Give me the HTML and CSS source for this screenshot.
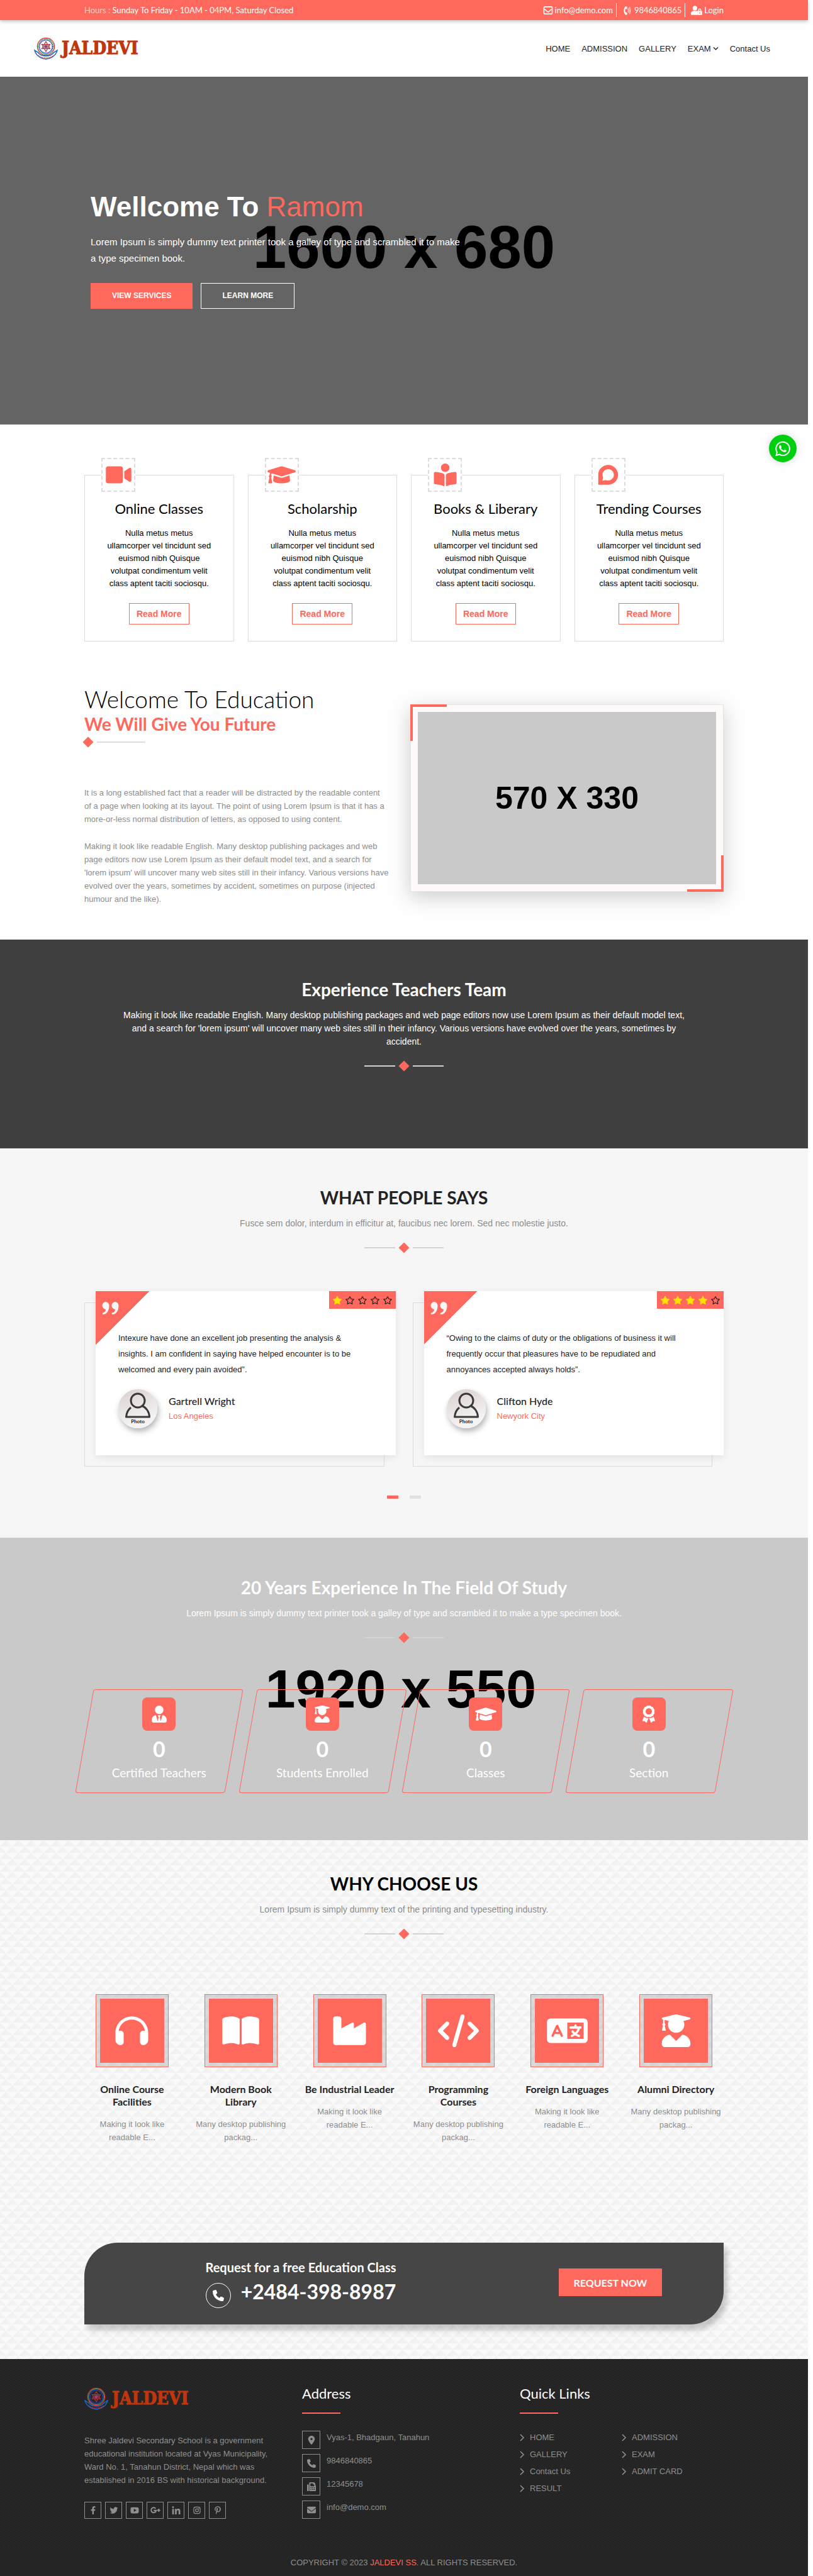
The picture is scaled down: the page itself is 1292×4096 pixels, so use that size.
FILE: index.html
```html
<!DOCTYPE html>
<html lang="en">
<head>
<meta charset="utf-8">
<meta name="viewport" content="width=device-width, initial-scale=1">
<title>Jaldevi Secondary School</title>
<link rel="stylesheet" href="styles.css">
</head>
<body>
<svg class="sprite" aria-hidden="true">
  <symbol id="i-video" viewBox="0 0 576 512"><path d="M336.2 64H47.8C21.4 64 0 85.4 0 111.8v288.4C0 426.6 21.4 448 47.8 448h288.4c26.4 0 47.8-21.4 47.8-47.8V111.8c0-26.4-21.4-47.8-47.8-47.8zm189.4 37.7L416 177.3v157.4l109.6 75.5c21.2 14.6 50.4-.3 50.4-25.8V127.5c0-25.4-29.1-40.4-50.4-25.8z"/></symbol>
  <symbol id="i-cap" viewBox="0 0 640 512"><path d="M622.34 153.2L343.4 67.5c-15.2-4.67-31.6-4.67-46.79 0L17.66 153.2c-23.54 7.23-23.54 38.36 0 45.59l48.63 14.94c-10.67 13.19-17.23 29.28-17.88 46.9C38.78 266.15 32 276.11 32 288c0 10.78 5.68 19.85 13.86 25.65L20.33 428.53C18.11 438.52 25.71 448 35.94 448h56.11c10.24 0 17.84-9.48 15.62-19.47L82.14 313.65C90.32 307.85 96 298.78 96 288c0-11.57-6.47-21.25-15.66-26.87.76-15.02 8.44-28.3 20.69-36.72L296.6 284.5c9.06 2.78 26.44 6.25 46.79 0l278.95-85.7c23.55-7.24 23.55-38.36 0-45.6zM352.79 315.09c-28.53 8.76-52.84 3.92-65.59 0l-145.02-44.55L128 384c0 35.35 85.96 64 192 64s192-28.65 192-64l-14.18-113.47-145.03 44.56z"/></symbol>
  <symbol id="i-reader" viewBox="0 0 512 512"><path d="M352 96c0-53.02-42.98-96-96-96s-96 42.98-96 96 42.98 96 96 96 96-42.98 96-96zM233.59 241.1c-59.33-36.32-155.43-46.3-203.79-49.05C13.55 191.13 0 203.51 0 219.14v222.8c0 14.33 11.59 26.28 26.49 27.05 43.66 2.29 131.99 10.68 193.04 41.43 9.37 4.72 20.48-1.71 20.48-11.87V252.56c-.01-4.67-2.32-8.95-6.42-11.46zm248.61-49.05c-48.35 2.74-144.46 12.73-203.78 49.05-4.1 2.51-6.41 6.96-6.41 11.63v245.79c0 10.19 11.14 16.63 20.54 11.9 61.04-30.72 149.32-39.11 192.97-41.4 14.9-.78 26.49-12.73 26.49-27.06V219.14c-.01-15.63-13.56-28.01-29.81-27.09z"/></symbol>
  <symbol id="i-discourse" viewBox="0 0 448 512"><path d="M225.9 32C103.3 32 0 130.5 0 252.1 0 256 .1 480 .1 480l225.8-.2c122.7 0 222.1-102.3 222.1-223.9C448 134.3 348.6 32 225.9 32zM224 384c-19.4 0-37.9-4.3-54.4-12.1L88.5 392l22.9-75c-9.8-18.1-15.4-38.9-15.4-61 0-70.7 57.3-128 128-128s128 57.3 128 128-57.3 128-128 128z"/></symbol>
  <symbol id="i-whatsapp" viewBox="0 0 448 512"><path d="M380.9 97.1C339 55.1 283.2 32 223.9 32c-122.4 0-222 99.6-222 222 0 39.1 10.2 77.3 29.6 111L0 480l117.7-30.9c32.4 17.7 68.9 27 106.1 27h.1c122.3 0 224.1-99.6 224.1-222 0-59.3-25.2-115-67.1-157zm-157 341.6c-33.2 0-65.7-8.9-94-25.7l-6.7-4-69.8 18.3L72 359.2l-4.4-7c-18.5-29.4-28.2-63.3-28.2-98.2 0-101.7 82.8-184.5 184.6-184.5 49.3 0 95.6 19.2 130.4 54.1 34.8 34.9 56.2 81.2 56.1 130.5 0 101.8-84.9 184.6-186.6 184.6zm101.2-138.2c-5.5-2.8-32.8-16.2-37.9-18-5.1-1.9-8.8-2.8-12.5 2.8-3.7 5.6-14.3 18-17.6 21.8-3.2 3.7-6.5 4.2-12 1.4-32.6-16.3-54-29.1-75.5-66-5.7-9.8 5.7-9.1 16.3-30.3 1.8-3.7.9-6.9-.5-9.7-1.4-2.8-12.5-30.1-17.1-41.2-4.5-10.8-9.1-9.3-12.5-9.5-3.2-.2-6.9-.2-10.6-.2-3.7 0-9.7 1.4-14.8 6.9-5.1 5.6-19.4 19-19.4 46.3 0 27.3 19.9 53.7 22.6 57.4 2.8 3.7 39.1 59.7 94.8 83.8 35.2 15.2 49 16.5 66.6 13.9 10.7-1.6 32.8-13.4 37.4-26.4 4.6-13 4.6-24.1 3.2-26.4-1.3-2.5-5-3.9-10.5-6.6z"/></symbol>
  <symbol id="i-tie" viewBox="0 0 448 512"><path d="M224 256c70.7 0 128-57.3 128-128S294.7 0 224 0 96 57.3 96 128s57.3 128 128 128zm95.8 32.6L272 480l-32-136 32-56h-96l32 56-32 136-47.8-191.4C56.9 292 0 350.3 0 422.4V464c0 26.5 21.5 48 48 48h352c26.5 0 48-21.5 48-48v-41.6c0-72.1-56.9-130.4-128.2-133.8z"/></symbol>
  <symbol id="i-graduate" viewBox="0 0 448 512"><path d="M319.4 320.6L224 416l-95.4-95.4C57.1 323.7 0 382.2 0 454.4v9.6c0 26.5 21.5 48 48 48h352c26.5 0 48-21.5 48-48v-9.6c0-72.2-57.1-130.7-128.6-133.8zM13.6 79.8l6.4 1.5v58.4c-7 4.2-12 11.5-12 20.3 0 8.4 4.6 15.4 11.1 19.7L3.5 242c-1.7 6.9 2.1 14 7.6 14h41.8c5.5 0 9.3-7.1 7.6-14l-15.6-62.3C51.4 175.4 56 168.4 56 160c0-8.8-5-16.1-12-20.3V87.1l66 15.9c-8.6 17.2-14 36.4-14 57 0 70.7 57.3 128 128 128s128-57.3 128-128c0-20.6-5.3-39.8-14-57l96.3-23.2c18.2-4.4 18.2-27.1 0-31.5l-190.4-46c-13-3.1-26.7-3.1-39.7 0L13.6 48.2c-18.1 4.4-18.1 27.2 0 31.6z"/></symbol>
  <symbol id="i-award" viewBox="0 0 384 512"><path d="M97.12 362.63c-8.69-8.69-4.16-6.24-25.12-11.85-9.51-2.55-17.87-7.45-25.43-13.32L1.2 448.7c-4.39 10.77 3.81 22.47 15.43 22.03l52.69-2.01L105.56 507c8 8.44 22.04 5.81 26.43-4.96l52.05-127.62c-10.84 6.04-22.87 9.58-35.31 9.58-19.5 0-37.82-7.59-51.61-21.37zM382.8 448.7l-45.37-111.24c-7.56 5.88-15.92 10.77-25.43 13.32-21.07 5.64-16.45 3.18-25.12 11.85-13.79 13.78-32.12 21.37-51.62 21.37-12.44 0-24.47-3.55-35.31-9.58L252 502.04c4.39 10.77 18.44 13.4 26.43 4.96l36.25-38.28 52.69 2.01c11.62.44 19.82-11.27 15.43-22.03zM263 340c15.28-15.55 17.03-14.21 38.79-20.14 13.89-3.79 24.75-14.84 28.47-28.98 7.48-28.4 5.54-24.97 25.95-45.75 10.17-10.35 14.14-25.44 10.42-39.58-7.47-28.38-7.48-24.42 0-52.83 3.72-14.14-.25-29.23-10.42-39.58-20.41-20.78-18.47-17.36-25.95-45.75-3.72-14.14-14.58-25.19-28.47-28.98-27.88-7.61-24.52-5.62-44.95-26.41-10.17-10.35-25-14.4-38.89-10.61-27.87 7.6-23.98 7.61-51.9 0-13.89-3.79-28.72.25-38.89 10.61-20.41 20.78-17.05 18.8-44.94 26.41-13.89 3.79-24.75 14.84-28.47 28.98-7.47 28.39-5.54 24.97-25.95 45.75-10.17 10.35-14.15 25.44-10.42 39.58 7.47 28.36 7.48 24.4 0 52.82-3.72 14.14.25 29.23 10.42 39.59 20.41 20.78 18.47 17.35 25.95 45.75 3.72 14.14 14.58 25.19 28.47 28.98C104.6 325.96 106.27 325 121 340c13.23 13.47 33.84 15.88 49.74 5.82a39.676 39.676 0 0 1 42.53 0c15.89 10.06 36.5 7.65 49.73-5.82zM97.66 175.96c0-53.03 42.24-96.02 94.34-96.02s94.34 42.99 94.34 96.02-42.24 96.02-94.34 96.02-94.34-42.99-94.34-96.02z"/></symbol>
  <symbol id="i-headphones" viewBox="0 0 512 512"><path d="M256 80C149.9 80 62.4 159.4 49.6 262c9.4-3.8 19.6-6 30.4-6c26.5 0 48 21.5 48 48V432c0 26.5-21.5 48-48 48c-44.2 0-80-35.8-80-80V384 336 288C0 146.6 114.6 32 256 32s256 114.6 256 256v48 48 16c0 44.2-35.8 80-80 80c-26.5 0-48-21.5-48-48V304c0-26.5 21.5-48 48-48c10.8 0 21 2.1 30.4 6C449.6 159.4 362.1 80 256 80z"/></symbol>
  <symbol id="i-book" viewBox="0 0 576 512"><path d="M249.6 471.5c10.8 3.8 22.4-4.1 22.4-15.5V78.6c0-4.2-1.6-8.4-5-11C247.4 52 202.4 32 144 32C93.5 32 46.3 45.3 18.1 56.1C6.8 60.5 0 71.7 0 83.8V454.1c0 11.9 12.8 20.2 24.1 16.5C55.6 460.1 105.5 448 144 448c33.9 0 79 14 105.6 23.5zm76.8 0C353 462 398.1 448 432 448c38.5 0 88.4 12.1 119.9 22.6c11.3 3.8 24.1-4.6 24.1-16.5V83.8c0-12.1-6.8-23.3-18.1-27.6C529.7 45.3 482.5 32 432 32c-58.4 0-103.4 20-123 35.6c-3.3 2.6-5 6.8-5 11V456c0 11.4 11.7 19.3 22.4 15.5z"/></symbol>
  <symbol id="i-industry" viewBox="0 0 512 512"><path d="M36 32h56c20 0 36 14 36 36v150l162-86c16-8 34 0 34 16v70l150-86c16-9 38-2 38 16v296c0 20-14 36-36 36H36c-20 0-36-16-36-36V68c0-20 14-36 36-36z"/></symbol>
  <symbol id="i-code" viewBox="0 0 640 512"><path d="M392.8 1.2c-17-4.9-34.7 5-39.6 22l-128 448c-4.9 17 5 34.7 22 39.6s34.7-5 39.6-22l128-448c4.9-17-5-34.7-22-39.6zm80.6 120.1c-12.5 12.5-12.5 32.8 0 45.3L562.7 256l-89.4 89.4c-12.5 12.5-12.5 32.8 0 45.3s32.8 12.5 45.3 0l112-112c12.5-12.5 12.5-32.8 0-45.3l-112-112c-12.5-12.5-32.8-12.5-45.3 0zm-306.7 0c-12.5-12.5-32.8-12.5-45.3 0l-112 112c-12.5 12.5-12.5 32.8 0 45.3l112 112c12.5 12.5 32.8 12.5 45.3 0s12.5-32.8 0-45.3L77.3 256l89.4-89.4c12.5-12.5 12.5-32.8 0-45.3z"/></symbol>
  <symbol id="i-language" viewBox="0 0 640 512"><rect y="64" width="640" height="384" rx="62"/><rect x="320" y="128" width="256" height="256" fill="#ff685c"/><g fill="none" stroke-linecap="round" stroke-linejoin="round" stroke-width="36"><path stroke="#ff685c" d="M90 334l72-154 72 154M118 290h88"/><path stroke="#fff" d="M448 172v28M370 206h156M506 208c-16 58-60 106-114 128M404 268c24 34 58 56 98 70"/></g></symbol>
  <symbol id="i-phone" viewBox="0 0 512 512"><path d="M164.9 24.6c-7.7-18.6-28-28.5-47.4-23.2l-88 24C12.1 30.2 0 46 0 64C0 311.4 200.6 512 448 512c18 0 33.8-12.1 38.6-29.5l24-88c5.3-19.4-4.6-39.7-23.2-47.4l-96-40c-16.3-6.8-35.2-2.1-46.3 11.6L304.7 368C234.3 334.7 177.3 277.7 144 207.3L193.3 167c13.7-11.2 18.4-30 11.6-46.3l-40-96z"/></symbol>
  <symbol id="i-pin" viewBox="0 0 384 512"><path d="M215.7 499.2C267 435 384 279.4 384 192C384 86 298 0 192 0S0 86 0 192c0 87.4 117 243 168.3 307.2c12.3 15.3 35.1 15.3 47.4 0zM192 128a64 64 0 1 1 0 128 64 64 0 1 1 0-128z"/></symbol>
  <symbol id="i-fax" viewBox="0 0 512 512"><path fill-rule="evenodd" d="M20 128h56c11 0 20 9 20 20v344c0 11-9 20-20 20H20c-11 0-20-9-20-20V148c0-11 9-20 20-20zM128 40c0-22 18-40 40-40h220c11 0 21 4 28 12l52 52c8 7 12 17 12 28v80c18 6 32 20 32 40v272c0 16-12 28-28 28H156c-16 0-28-12-28-28zM192 64v160h224V128h-64V64zM200 280v56h56v-56zM296 280v56h56v-56zM392 280v56h56v-56zM200 384v56h56v-56zM296 384v56h56v-56zM392 384v56h56v-56z"/></symbol>
  <symbol id="i-mail" viewBox="0 0 512 512"><path d="M48 64C21.5 64 0 85.5 0 112c0 15.1 7.1 29.3 19.2 38.4L236.8 313.6c11.4 8.5 27 8.5 38.4 0L492.8 150.4c12.1-9.1 19.2-23.3 19.2-38.4c0-26.5-21.5-48-48-48H48zM0 176V384c0 35.3 28.7 64 64 64H448c35.3 0 64-28.7 64-64V176L294.4 339.2c-22.8 17.1-54 17.1-76.8 0L0 176z"/></symbol>
  <symbol id="i-mail-line" viewBox="0 0 16 16"><rect x="1" y="2" width="14" height="12" rx="1.500" fill="none" stroke="currentColor" stroke-width="1.700"/><path d="M2 6l6 5L14 6" fill="none" stroke="currentColor" stroke-width="1.700"/></symbol>
  <symbol id="i-phone-waves" viewBox="0 0 384 512"><path d="M97.333 506.966c-129.874-129.874-129.681-340.252 0-469.933 5.698-5.698 14.527-6.632 21.263-2.422l64.817 40.513a17.187 17.187 0 0 1 6.849 20.958l-32.408 81.021a17.188 17.188 0 0 1-17.669 10.719l-55.81-5.58c-21.051 58.261-20.612 122.471 0 179.515l55.811-5.581a17.188 17.188 0 0 1 17.669 10.719l32.408 81.022a17.188 17.188 0 0 1-6.849 20.958l-64.817 40.513a17.190 17.190 0 0 1-21.264-2.422z"/><path d="M222 170c16 50 16 110 0 172M270 120c36 86 36 186 0 272M318 76c56 120 56 250 0 366" fill="none" stroke="currentColor" stroke-width="32" stroke-linecap="round"/></symbol>
  <symbol id="i-user-lock" viewBox="0 0 640 512"><circle cx="224" cy="128" r="128"/><path d="M314 288c-90 10-130-8-180 0C60 288 0 348 0 422v42c0 26 22 48 48 48h346c-6-10-10-20-10-32V320c0-10 2-20 8-28-24-6-50-6-78-4z"/><path fill-rule="evenodd" d="M608 288h-32v-56a80 80 0 0 0-160 0v56h-16c-18 0-32 14-32 32v160c0 18 14 32 32 32h208c18 0 32-14 32-32V320c0-18-14-32-32-32zM496 432a32 32 0 1 1 0-64 32 32 0 0 1 0 64zm32-144h-64v-58a32 32 0 0 1 64 0z"/></symbol>
  <symbol id="i-quote" viewBox="0 0 27 20"><path d="M6 0a6 6 0 0 1 6 6c0 7-3 13-9 14-2 .3-2.500-2-1-2.500 3-1 4.500-3 4.500-5.600A6 6 0 0 1 6 0zM21 0a6 6 0 0 1 6 6c0 7-3 13-9 14-2 .3-2.500-2-1-2.500 3-1 4.500-3 4.500-5.600A6 6 0 0 1 21 0z"/></symbol>
  <symbol id="i-star" viewBox="-20 -20 616 552"><path d="M259.3 17.8L194 150.2 47.9 171.5c-26.2 3.8-36.7 36.1-17.7 54.6l105.700 103-25 145.500c-4.500 26.300 23.200 46 46.400 33.700L288 439.600l130.700 68.700c23.200 12.200 50.900-7.400 46.400-33.700l-25-145.500 105.700-103c19-18.500 8.500-50.800-17.700-54.600L382 150.200 316.700 17.800c-11.700-23.600-45.600-23.900-57.400 0z"/></symbol>
  <symbol id="i-star-line" viewBox="-20 -20 616 552"><path fill="none" stroke="currentColor" stroke-width="48" stroke-linejoin="round" d="M288 34l76 138 166 26-118 120 24 166-148-72-148 72 24-166L46 198l166-26z"/></symbol>
  <symbol id="i-facebook" viewBox="0 0 320 512"><path d="M279.140 288l14.220-92.660h-88.910v-60.130c0-25.350 12.420-50.060 52.240-50.060h40.420V6.260S260.430 0 225.360 0c-73.220 0-121.080 44.380-121.080 124.720v70.620H22.890V288h81.390v224h100.170V288z"/></symbol>
  <symbol id="i-twitter" viewBox="0 0 512 512"><path d="M459.37 151.716c.325 4.548.325 9.097.325 13.645 0 138.72-105.583 298.558-298.558 298.558-59.452 0-114.68-17.219-161.137-47.106 8.447.974 16.568 1.299 25.34 1.299 49.055 0 94.213-16.568 130.274-44.832-46.132-.975-84.792-31.188-98.112-72.772 6.498.974 12.995 1.624 19.818 1.624 9.421 0 18.843-1.3 27.614-3.573-48.081-9.747-84.143-51.98-84.143-102.985v-1.299c13.969 7.797 30.214 12.67 47.431 13.319-28.264-18.843-46.781-51.005-46.781-87.391 0-19.492 5.197-37.36 14.294-52.954 51.655 63.675 129.3 105.258 216.365 109.807-1.624-7.797-2.599-15.918-2.599-24.04 0-57.828 46.782-104.934 104.934-104.934 30.213 0 57.502 12.67 76.67 33.137 23.715-4.548 46.456-13.32 66.599-25.34-7.798 24.366-24.366 44.833-46.132 57.827 21.117-2.273 41.584-8.122 60.426-16.243-14.292 20.791-32.161 39.308-52.628 54.253z"/></symbol>
  <symbol id="i-youtube" viewBox="0 0 16 16"><path fill-rule="evenodd" d="M3 2h10a3 3 0 0 1 3 3v6a3 3 0 0 1-3 3H3a3 3 0 0 1-3-3V5a3 3 0 0 1 3-3zm3.500 3v6L11.500 8z"/></symbol>
  <symbol id="i-google" viewBox="0 0 20 16"><path fill="none" stroke="currentColor" stroke-width="2.400" d="M10.500 4.500A5 5 0 1 0 11.600 8.200H6.500M13.500 8h6M16.500 5v6"/></symbol>
  <symbol id="i-linkedin" viewBox="0 0 448 448"><path d="M100.28 448H7.4V148.9h92.88zM53.79 108.1C24.09 108.1 0 83.5 0 53.8a53.79 53.79 0 0 1 107.58 0c0 29.7-24.1 54.3-53.79 54.3zM447.9 448h-92.68V302.4c0-34.7-.7-79.2-48.29-79.2-48.29 0-55.69 37.7-55.69 76.7V448h-92.78V148.9h89.08v40.8h1.3c12.4-23.5 42.69-48.3 87.88-48.3 94 0 111.28 61.9 111.28 142.3V448z"/></symbol>
  <symbol id="i-instagram" viewBox="0 0 16 16"><rect x="1.800" y="1.800" width="12.400" height="12.400" rx="3.500" fill="none" stroke="currentColor" stroke-width="1.500"/><circle cx="8" cy="8" r="2.900" fill="none" stroke="currentColor" stroke-width="1.500"/><circle cx="11.700" cy="4.300" r=".9"/></symbol>
  <symbol id="i-pinterest" viewBox="0 0 384 512"><path d="M204 6.5C101.4 6.5 0 74.9 0 185.6 0 256 39.6 296 63.6 296c9.9 0 15.6-27.6 15.6-35.4 0-9.3-23.7-29.1-23.7-67.8 0-80.4 61.2-137.4 140.4-137.4 68.1 0 118.5 38.7 118.5 109.8 0 53.1-21.3 152.7-90.3 152.7-24.9 0-46.2-18-46.2-43.8 0-37.8 26.4-74.4 26.4-113.4 0-66.2-93.9-54.2-93.9 25.8 0 16.8 2.1 35.4 9.6 50.7-13.8 59.4-42 147.9-42 209.1 0 18.9 2.7 37.5 4.5 56.4 3.4 3.8 1.7 3.4 6.9 1.5 50.4-69 48.6-82.5 71.4-172.8 12.3 23.4 44.1 36 69.3 36 106.2 0 153.9-103.5 153.9-196.8C384 71.3 298.2 6.5 204 6.5z"/></symbol>
  <symbol id="i-down" viewBox="0 0 10 8"><path fill="none" stroke="currentColor" stroke-width="1.500" d="M1 2l4 4 4-4"/></symbol>
  <symbol id="i-right" viewBox="0 0 8 12"><path fill="none" stroke="currentColor" stroke-width="1.600" d="M1 1l5 5-5 5"/></symbol>
  <symbol id="i-emblem" viewBox="0 0 38 36">
    <path d="M1 21c2 7 8 13 18 14 10-1 16-7 18-14l-5 3c-3 4-7 6-13 6s-10-2-13-6z" fill="none" stroke="#1a66c4" stroke-width="1.500"/>
    <path d="M7 29c3 3 7 4 12 4s9-1 12-4" fill="none" stroke="#d23a2e" stroke-width="1.500" stroke-dasharray="1.500 1"/>
    <circle cx="19" cy="15" r="13.700" fill="none" stroke="#e03a34" stroke-width="1.200"/>
    <circle cx="19" cy="15" r="12.500" fill="none" stroke="#4caf50" stroke-width="1"/>
    <circle cx="19" cy="15" r="10.500" fill="none" stroke="#2440c0" stroke-width="2" stroke-dasharray="1.600 .7"/>
    <path d="M19 7l6.500 11.500h-13zM19 23l-6.500-11.500h13z" fill="none" stroke="#a8323e" stroke-width="1.200"/>
    <circle cx="19" cy="15" r="2.800" fill="#8b4a6a"/>
  </symbol>
  <symbol id="i-person" viewBox="0 0 62 62"><g fill="none" stroke="#3a3a3a" stroke-width="3" stroke-linejoin="round"><circle cx="31" cy="18" r="11"/><path d="M20 29c-5 4-7 9-7.500 15h37c-.5-8-5-15-12.500-18"/></g></symbol>
</svg>

<div class="topbar">
  <div class="container topbar-row">
    <p><span class="soft">Hours :</span> Sunday To Friday - 10AM - 04PM, Saturday Closed</p>
    <ul class="topbar-links">
      <li><a href="#"><svg class="ico16"><use href="#i-mail-line"/></svg> info@demo.com</a></li>
      <li><a href="#"><svg class="ico16"><use href="#i-phone-waves"/></svg> 9846840865</a></li>
      <li><a href="#"><svg class="ico18"><use href="#i-user-lock"/></svg> Login</a></li>
    </ul>
  </div>
</div>

<header class="header">
  <a class="logo" href="#"><svg class="emblem"><use href="#i-emblem"/></svg><span>JALDEVI</span></a>
  <nav class="nav">
    <a href="#">HOME</a><a href="#">ADMISSION</a><a href="#">GALLERY</a><a href="#">EXAM<svg class="down"><use href="#i-down"/></svg></a><a href="#">Contact Us</a>
  </nav>
</header>

<section class="hero">
  <div class="placeholder hero-size">1600 x 680</div>
  <div class="container hero-copy">
    <h1>Wellcome To <span>Ramom</span></h1>
    <p>Lorem Ipsum is simply dummy text printer took a galley of type and scrambled it to make<br>a type specimen book.</p>
    <div class="hero-buttons">
      <button class="btn btn-fill" type="button">VIEW SERVICES</button>
      <button class="btn btn-line" type="button">LEARN MORE</button>
    </div>
  </div>
</section>

<section class="features">
  <a class="whatsapp" href="#" aria-label="WhatsApp"><svg><use href="#i-whatsapp"/></svg></a>
  <div class="container feature-grid">
    <article class="feature"><div class="feature-icon"><svg><use href="#i-video"/></svg></div><h3>Online Classes</h3><p>Nulla metus metus ullamcorper vel tincidunt sed euismod nibh Quisque volutpat condimentum velit class aptent taciti sociosqu.</p><a class="more" href="#">Read More</a></article>
    <article class="feature"><div class="feature-icon"><svg><use href="#i-cap"/></svg></div><h3>Scholarship</h3><p>Nulla metus metus ullamcorper vel tincidunt sed euismod nibh Quisque volutpat condimentum velit class aptent taciti sociosqu.</p><a class="more" href="#">Read More</a></article>
    <article class="feature"><div class="feature-icon"><svg><use href="#i-reader"/></svg></div><h3>Books &amp; Liberary</h3><p>Nulla metus metus ullamcorper vel tincidunt sed euismod nibh Quisque volutpat condimentum velit class aptent taciti sociosqu.</p><a class="more" href="#">Read More</a></article>
    <article class="feature"><div class="feature-icon"><svg><use href="#i-discourse"/></svg></div><h3>Trending Courses</h3><p>Nulla metus metus ullamcorper vel tincidunt sed euismod nibh Quisque volutpat condimentum velit class aptent taciti sociosqu.</p><a class="more" href="#">Read More</a></article>
  </div>
</section>

<section class="container welcome">
  <div>
    <h2><span class="light">Welcome To Education</span>We Will Give You Future</h2>
    <div class="divider divider-left"><i></i><b></b></div>
    <div class="welcome-text">
      <p>It is a long established fact that a reader will be distracted by the readable content<br>of a page when looking at its layout. The point of using Lorem Ipsum is that it has a more-or-less normal distribution of letters, as opposed to using content.</p>
      <p>Making it look like readable English. Many desktop publishing packages and web page editors now use Lorem Ipsum as their default model text, and a search for 'lorem ipsum' will uncover many web sites still in their infancy. Various versions have evolved over the years, sometimes by accident, sometimes on purpose (injected humour and the like).</p>
    </div>
  </div>
  <div class="frame"><div class="frame-image">570 X 330</div></div>
</section>

<section class="teachers">
  <div class="container section-head">
    <h2>Experience Teachers Team</h2>
    <p>Making it look like readable English. Many desktop publishing packages and web page editors now use Lorem Ipsum as their default model text,<br>and a search for 'lorem ipsum' will uncover many web sites still in their infancy. Various versions have evolved over the years, sometimes by<br>accident.</p>
    <div class="divider"><b></b><i></i><b></b></div>
  </div>
</section>

<section class="people">
  <div class="container section-head">
    <h2>WHAT PEOPLE SAYS</h2>
    <p>Fusce sem dolor, interdum in efficitur at, faucibus nec lorem. Sed nec molestie justo.</p>
    <div class="divider"><b></b><i></i><b></b></div>
  </div>
  <div class="container quotes">
    <div class="quote">
      <article class="quote-card">
        <div class="quote-mark"><svg><use href="#i-quote"/></svg></div>
        <div class="stars"><svg class="on"><use href="#i-star"/></svg><svg><use href="#i-star-line"/></svg><svg><use href="#i-star-line"/></svg><svg><use href="#i-star-line"/></svg><svg><use href="#i-star-line"/></svg></div>
        <p>Intexure have done an excellent job presenting the analysis &amp; insights. I am confident in saying have helped encounter is to be welcomed and every pain avoided”.</p>
        <div class="author"><div class="avatar"><svg><use href="#i-person"/></svg><span>Photo</span></div><div><h4>Gartrell Wright</h4><span class="city">Los Angeles</span></div></div>
      </article>
    </div>
    <div class="quote">
      <article class="quote-card">
        <div class="quote-mark"><svg><use href="#i-quote"/></svg></div>
        <div class="stars"><svg class="on"><use href="#i-star"/></svg><svg class="on"><use href="#i-star"/></svg><svg class="on"><use href="#i-star"/></svg><svg class="on"><use href="#i-star"/></svg><svg><use href="#i-star-line"/></svg></div>
        <p>“Owing to the claims of duty or the obligations of business it will frequently occur that pleasures have to be repudiated and annoyances accepted always holds”.</p>
        <div class="author"><div class="avatar"><svg><use href="#i-person"/></svg><span>Photo</span></div><div><h4>Clifton Hyde</h4><span class="city">Newyork City</span></div></div>
      </article>
    </div>
  </div>
  <div class="dots"><button class="dot active" type="button" aria-label="Slide 1"></button><button class="dot" type="button" aria-label="Slide 2"></button></div>
</section>

<section class="counters">
  <div class="placeholder counter-size">1920 x 550</div>
  <div class="container section-head">
    <h2>20 Years Experience In The Field Of Study</h2>
    <p>Lorem Ipsum is simply dummy text printer took a galley of type and scrambled it to make a type specimen book.</p>
    <div class="divider"><b></b><i></i><b></b></div>
  </div>
  <div class="container counter-grid">
    <div class="counter"><div class="tile"><svg><use href="#i-tie"/></svg></div><strong>0</strong><span>Certified Teachers</span></div>
    <div class="counter"><div class="tile"><svg><use href="#i-graduate"/></svg></div><strong>0</strong><span>Students Enrolled</span></div>
    <div class="counter"><div class="tile"><svg><use href="#i-cap"/></svg></div><strong>0</strong><span>Classes</span></div>
    <div class="counter"><div class="tile"><svg><use href="#i-award"/></svg></div><strong>0</strong><span>Section</span></div>
  </div>
</section>

<section class="why">
  <div class="container section-head">
    <h2>WHY CHOOSE US</h2>
    <p>Lorem Ipsum is simply dummy text of the printing and typesetting industry.</p>
    <div class="divider"><b></b><i></i><b></b></div>
  </div>
  <div class="container why-grid">
    <article><div class="why-icon"><svg><use href="#i-headphones"/></svg></div><h3>Online Course Facilities</h3><p>Making it look like readable E...</p></article>
    <article><div class="why-icon"><svg><use href="#i-book"/></svg></div><h3>Modern Book Library</h3><p>Many desktop publishing packag...</p></article>
    <article><div class="why-icon"><svg><use href="#i-industry"/></svg></div><h3>Be Industrial Leader</h3><p>Making it look like readable E...</p></article>
    <article><div class="why-icon"><svg><use href="#i-code"/></svg></div><h3>Programming Courses</h3><p>Many desktop publishing packag...</p></article>
    <article><div class="why-icon"><svg><use href="#i-language"/></svg></div><h3>Foreign Languages</h3><p>Making it look like readable E...</p></article>
    <article><div class="why-icon"><svg><use href="#i-graduate"/></svg></div><h3>Alumni Directory</h3><p>Many desktop publishing packag...</p></article>
  </div>
  <div class="container request">
    <div>
      <h3>Request for a free Education Class</h3>
      <div class="call"><span class="ring"><svg><use href="#i-phone"/></svg></span><strong>+2484-398-8987</strong></div>
    </div>
    <button class="request-btn" type="button">REQUEST NOW</button>
  </div>
</section>

<footer class="footer">
  <div class="container footer-grid">
    <div>
      <a class="logo" href="#"><svg class="emblem"><use href="#i-emblem"/></svg><span>JALDEVI</span></a>
      <p class="about">Shree Jaldevi Secondary School is a government educational institution located at Vyas Municipality, Ward No. 1, Tanahun District, Nepal which was established in 2016 BS with historical background.</p>
      <div class="social">
        <a href="#" aria-label="Facebook"><svg><use href="#i-facebook"/></svg></a>
        <a href="#" aria-label="Twitter"><svg><use href="#i-twitter"/></svg></a>
        <a href="#" aria-label="YouTube"><svg><use href="#i-youtube"/></svg></a>
        <a href="#" aria-label="Google Plus"><svg><use href="#i-google"/></svg></a>
        <a href="#" aria-label="LinkedIn"><svg><use href="#i-linkedin"/></svg></a>
        <a href="#" aria-label="Instagram"><svg><use href="#i-instagram"/></svg></a>
        <a href="#" aria-label="Pinterest"><svg><use href="#i-pinterest"/></svg></a>
      </div>
    </div>
    <div>
      <h3>Address</h3>
      <ul class="contact">
        <li><i><svg><use href="#i-pin"/></svg></i>Vyas-1, Bhadgaun, Tanahun</li>
        <li><i><svg><use href="#i-phone"/></svg></i>9846840865</li>
        <li><i><svg><use href="#i-fax"/></svg></i>12345678</li>
        <li><i><svg><use href="#i-mail"/></svg></i>info@demo.com</li>
      </ul>
    </div>
    <div>
      <h3>Quick Links</h3>
      <div class="links">
        <a href="#"><svg><use href="#i-right"/></svg>HOME</a>
        <a href="#"><svg><use href="#i-right"/></svg>ADMISSION</a>
        <a href="#"><svg><use href="#i-right"/></svg>GALLERY</a>
        <a href="#"><svg><use href="#i-right"/></svg>EXAM</a>
        <a href="#"><svg><use href="#i-right"/></svg>Contact Us</a>
        <a href="#"><svg><use href="#i-right"/></svg>ADMIT CARD</a>
        <a href="#"><svg><use href="#i-right"/></svg>RESULT</a>
      </div>
    </div>
  </div>
  <div class="copyright">COPYRIGHT © 2023 <a href="#">JALDEVI SS</a>. ALL RIGHTS RESERVED.</div>
</footer>
</body>
</html>
```
FILE: styles.css
```css
:root {
  --coral: #ff685c;
  --grey: #8d8d8d;
  --sans: "Liberation Sans", Arial, sans-serif;
  --head: Lato, "Liberation Sans", sans-serif;
}
* { box-sizing: border-box; }
body {
  margin: 0;
  padding-right: 8px;
  background: #fefefe;
  color: #000;
  font: 13px/21px var(--sans);
}
h1, h2, h3, h4, p, ul { margin: 0; padding: 0; }
ul { list-style: none; }
a { color: inherit; text-decoration: none; }
button { font: inherit; cursor: pointer; }
svg { fill: currentColor; display: block; }
i { font-style: normal; }
.sprite { position: absolute; width: 0; height: 0; }
.container { width: calc(100% - 32px); max-width: 1016px; margin-inline: auto; }

.topbar {
  position: relative;
  z-index: 2;
  background: var(--coral);
  color: #fff;
  font-family: var(--head);
  box-shadow: 0 2px 6px rgba(0, 0, 0, .25);
}
.topbar-row { display: flex; justify-content: space-between; align-items: center; padding-block: 5px; }
.soft { opacity: .65; }
.topbar-links { display: flex; }
.topbar-links li { line-height: 22px; padding-left: 9px; }
.topbar-links li + li { border-left: 1px solid #fff; }
.topbar-links li:not(:last-child) { padding-right: 5px; }
.topbar-links a { display: flex; align-items: center; gap: 3px; }
.ico16 { width: 16px; height: 15px; }
.ico18 { width: 18px; height: 15px; }

.header {
  display: flex;
  justify-content: space-between;
  align-items: center;
  padding: 27px 60px 27px 54px;
  background: #fefefe;
}
.logo {
  display: flex;
  align-items: center;
  gap: 6px;
  height: 36px;
  color: #bf360c;
  font: bold 28px/36px "DejaVu Serif Condensed", "DejaVu Serif", serif;
  -webkit-text-stroke: 1px #bf360c;
}
.emblem { width: 38px; height: 36px; }
.nav { display: flex; gap: 18px; color: #232323; }
.nav a { display: flex; align-items: center; gap: 3px; }
.down { width: 9px; height: 8px; }

.hero { position: relative; background: #646464; color: #fff; }
.placeholder {
  position: absolute;
  inset: 0;
  display: flex;
  align-items: center;
  justify-content: center;
  color: #000;
  font-weight: bold;
}
.hero-size { font-size: 96px; padding-bottom: 12px; }
.hero-copy { position: relative; padding: 181px 10px 184px; }
.hero-copy h1 { font-size: 44px; line-height: 52px; }
.hero-copy h1 span { color: var(--coral); font-weight: normal; }
.hero-copy p { max-width: 624px; margin-top: 17px; font-size: 15px; line-height: 26px; }
.hero-buttons { display: flex; gap: 13px; margin-top: 26px; }
.btn {
  height: 41px;
  padding: 0 33px;
  border: 1px solid #fff;
  background: transparent;
  color: #fff;
  font-size: 12px;
  font-weight: bold;
}
.btn-fill { background: var(--coral); border-color: var(--coral); }

.features { position: relative; padding-top: 80px; }
.whatsapp {
  position: absolute;
  top: 16px;
  right: 18px;
  display: grid;
  place-items: center;
  width: 44px;
  height: 44px;
  border-radius: 50%;
  background: #00cf10;
  color: #fff;
  box-shadow: 0 0 12px rgba(0, 0, 0, .15);
}
.whatsapp svg { width: 24px; height: 27px; }
.feature-grid { display: grid; grid-template-columns: repeat(4, 1fr); gap: 22px; }
.feature {
  position: relative;
  padding: 39px 30px 26px;
  border: 1px solid #ddd;
  text-align: center;
}
.feature-icon {
  position: absolute;
  top: -28px;
  left: 26px;
  display: grid;
  place-items: center;
  width: 54px;
  height: 54px;
  border: 2px dashed #ddd;
  background: #fefefe;
  color: var(--coral);
}
.feature-icon svg { width: 45px; height: 36px; }
.feature h3 { margin-inline: -20px; font: 22px/28px var(--head); }
.feature p { margin-top: 15px; line-height: 20px; }
.more {
  display: inline-block;
  margin-top: 21px;
  padding: 0 11px;
  border: 1px solid var(--coral);
  color: var(--coral);
  font-size: 14px;
  font-weight: bold;
  line-height: 32px;
  vertical-align: top;
}

.welcome {
  display: grid;
  grid-template-columns: 1fr 498px;
  gap: 20px;
  align-items: start;
  padding-block: 70px 54px;
}
.welcome h2 { color: var(--coral); font: bold 28px/34px var(--head); }
.welcome .light { display: block; color: #000; font-size: 37px; font-weight: 300; line-height: 44px; }
.welcome-text { max-width: 490px; margin-top: 64px; color: var(--grey); }
.welcome-text p + p { margin-top: 22px; }
.divider { display: flex; align-items: center; justify-content: center; gap: 8px; }
.divider i { width: 12px; height: 12px; background: var(--coral); transform: rotate(45deg); }
.divider b { width: 49px; height: 2px; background: #d3d3d3; }
.divider-left { justify-content: flex-start; margin: 6px 0 0 0; }
.divider-left b { width: 77px; background: #ddd; }
.frame {
  position: relative;
  margin-top: 30px;
  padding: 11px;
  border: 1px solid #e4e4e4;
  background: #fffafa;
  box-shadow: 0 8px 30px rgba(0, 0, 0, .2);
}
.frame::before, .frame::after { content: ""; position: absolute; width: 54px; height: 54px; }
.frame::before { top: -1px; left: -1px; border-top: 4px solid var(--coral); border-left: 4px solid var(--coral); }
.frame::after { right: -1px; bottom: -1px; border-right: 4px solid var(--coral); border-bottom: 4px solid var(--coral); }
.frame-image {
  display: grid;
  place-items: center;
  aspect-ratio: 474 / 274;
  background: #c9c9c9;
  font-size: 50px;
  font-weight: bold;
}

.section-head { position: relative; text-align: center; }
.section-head h2 { font: bold 28px/34px var(--head); }
.section-head p { margin: 14px auto 22px; font-size: 14px; }
.teachers { padding: 62px 0 125px; background: #404040; color: #fff; }

.people { padding: 61px 0 62px; background: #f6f6f6; color: #232323; }
.people .section-head p, .why .section-head p { color: var(--grey); }
.quotes { display: grid; grid-template-columns: 1fr 1fr; gap: 27px; margin-top: 63px; }
.quote { position: relative; padding: 0 0 18px 18px; }
.quote::before { content: ""; position: absolute; inset: 18px 18px 0 0; border: 1px solid #ddd; }
.quote-card {
  position: relative;
  padding: 62px 36px 43px;
  background: #fff;
  box-shadow: 0 4px 12px rgba(0, 0, 0, .08);
}
.quote-card p { line-height: 25px; }
.quote-mark {
  position: absolute;
  top: 0;
  left: 0;
  width: 85px;
  height: 85px;
  padding: 17px 9px;
  background: linear-gradient(135deg, var(--coral) 50%, transparent 50%);
  color: #f6f6f6;
}
.quote-mark svg { width: 28px; height: 20px; }
.stars {
  position: absolute;
  top: 0;
  right: 0;
  display: flex;
  gap: 4px;
  padding: 7px 5px 6px;
  background: var(--coral);
}
.stars svg { width: 16px; height: 15px; }
.stars .on { color: #ffe000; }
.author { display: flex; align-items: center; gap: 18px; margin-top: 19px; }
.author h4 { font: 500 16px/20px var(--head); }
.city { display: block; margin-top: 4px; color: var(--coral); line-height: 20px; }
.avatar {
  position: relative;
  width: 62px;
  height: 62px;
  border-radius: 50%;
  background: linear-gradient(160deg, #d9d0cd, #f4f2f2 75%);
  box-shadow: 2px 5px 10px rgba(0, 0, 0, .3);
}
.avatar svg { width: 62px; height: 62px; }
.avatar span { position: absolute; inset: 47px 0 auto; font: bold 8px/8px var(--head); text-align: center; }
.dots { display: flex; justify-content: center; gap: 18px; margin-top: 46px; }
.dot { width: 18px; height: 5px; padding: 0; border: 0; background: #e0e0e0; }
.dot.active { background: var(--coral); }

.counters { position: relative; padding: 62px 0 75px; background: #c9c9c9; color: #fff; }
.counter-size { padding-right: 10px; font-size: 86px; }
.counter-grid { position: relative; display: grid; grid-template-columns: repeat(4, 1fr); gap: 22px; margin-top: 76px; }
.counter { position: relative; display: flex; flex-direction: column; align-items: center; padding: 13px 0 21px; }
.counter::before {
  content: "";
  position: absolute;
  inset: 0;
  border: 1px solid var(--coral);
  border-radius: 4px;
  transform: skewX(-10deg);
}
.tile { position: relative; display: grid; place-items: center; width: 53px; height: 53px; border-radius: 8px; background: var(--coral); }
.tile svg { width: 34px; height: 27px; }
.counter strong { margin-top: 9px; font: bold 34px/40px var(--head); }
.counter span { margin-top: 7px; font: 19px/22px var(--head); }

.why {
  padding: 52px 0 55px;
  background-color: #f9f9f9;
  background-image:
    linear-gradient(45deg, rgba(0, 0, 0, .022) 25%, transparent 25%),
    linear-gradient(-45deg, rgba(0, 0, 0, .03) 25%, transparent 25%),
    linear-gradient(45deg, rgba(0, 0, 0, .022) 25%, transparent 25%),
    linear-gradient(-45deg, rgba(0, 0, 0, .03) 25%, transparent 25%);
  background-size: 20px 20px;
  background-position: 0 0, 0 0, 10px 10px, 10px 10px;
}
.why-grid { display: grid; grid-template-columns: repeat(6, 1fr); gap: 21px; margin-top: 90px; text-align: center; color: var(--grey); }
.why-icon {
  display: grid;
  place-items: center;
  width: 116px;
  height: 116px;
  margin-inline: auto;
  border: 1px solid var(--coral);
  background: linear-gradient(var(--coral), var(--coral)) content-box, rgba(0, 0, 0, .12);
  padding: 6px;
  color: #fff;
}
.why-icon svg { width: 65px; height: 52px; }
.why-grid h3 { margin-top: 25px; padding-inline: 2px; color: #232323; font: bold 16px/20px var(--head); }
.why-grid p { margin-top: 15px; }
.request {
  display: grid;
  grid-template-columns: 2fr 1fr;
  justify-items: center;
  align-items: start;
  margin-top: 157px;
  padding: 26px 16px;
  border-radius: 53px 0;
  background: #464646;
  color: #fff;
  font-family: var(--head);
  box-shadow: 6px 9px 9px rgba(0, 0, 0, .2);
}
.request h3 { font-size: 20px; line-height: 26px; }
.call { display: flex; justify-content: center; gap: 16px; margin-top: 12px; }
.call strong { font-size: 32px; line-height: 28px; }
.ring { display: grid; place-items: center; width: 40px; height: 40px; border: 1px solid #fff; border-radius: 50%; }
.ring svg { width: 18px; height: 18px; }
.request-btn {
  height: 44px;
  margin-top: 15px;
  padding: 0 24px;
  border: 0;
  background: var(--coral);
  color: #fff;
  font-size: 16px;
  font-weight: bold;
}

.footer {
  background: repeating-conic-gradient(#373737 0 25%, #131313 0 50%) 0 0 / 2px 2px;
  color: #8f8f8f;
}
.footer-grid { display: grid; grid-template-columns: repeat(3, 1fr); gap: 22px; padding-block: 45px; }
.footer h3 { color: #fff; font: 22px/20px var(--head); }
.footer h3::after { content: ""; display: block; width: 61px; height: 2px; margin-top: 20px; background: var(--coral); }
.about { margin-top: 38px; }
.social { display: flex; gap: 6px; margin-top: 24px; }
.social a { display: grid; place-items: center; width: 27px; height: 27px; border: 1px solid #8f8f8f; }
.social svg { width: 18px; height: 13px; }
.contact { display: grid; gap: 8px; margin-top: 27px; }
.contact li { display: flex; gap: 10px; }
.contact i { display: grid; place-items: center; width: 29px; height: 29px; border: 1px solid #8f8f8f; }
.contact svg { width: 14px; height: 14px; }
.links { display: grid; grid-template-columns: 1fr 1fr; row-gap: 6px; margin-top: 27px; }
.links a { display: flex; align-items: center; gap: 8px; }
.links svg { width: 8px; height: 12px; }
.copyright { padding: 16px 16px 12px; background: #252525; line-height: 18px; text-align: center; }
.copyright a { color: var(--coral); }
```
